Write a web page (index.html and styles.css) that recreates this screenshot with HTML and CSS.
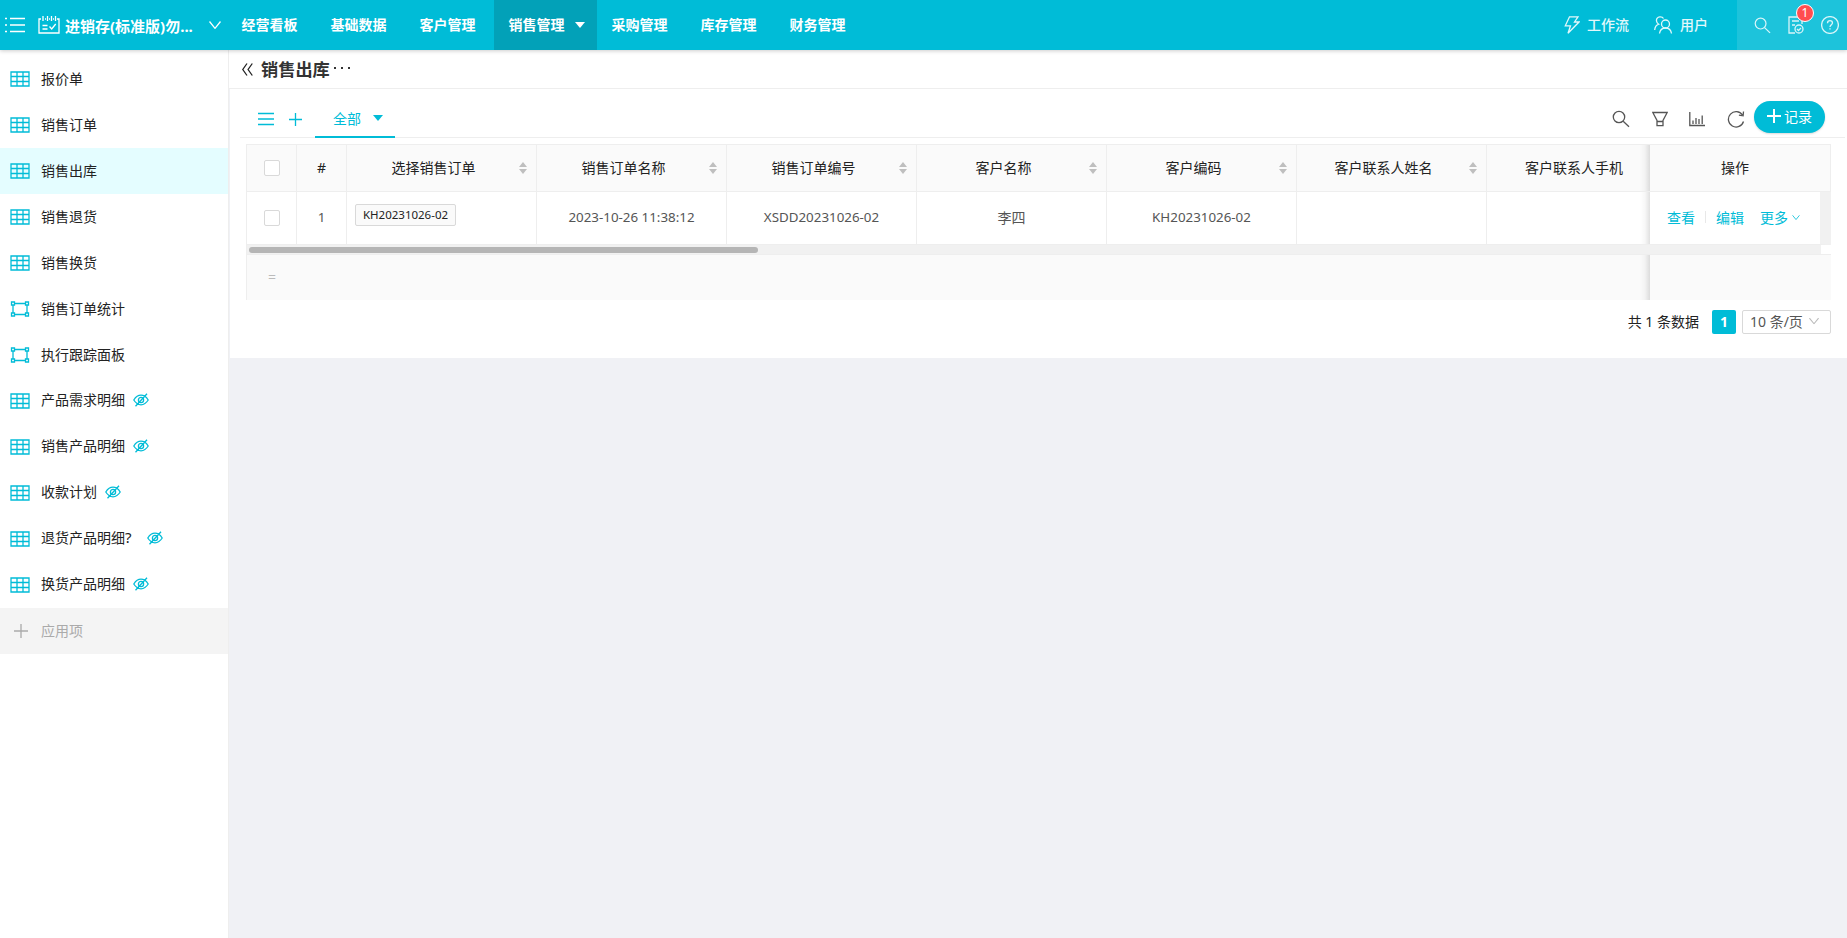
FILE: index.html
```html
<!DOCTYPE html>
<html lang="zh-CN">
<head>
  <meta charset="UTF-8">
  <meta name="viewport" content="width=device-width, initial-scale=1.0">
  <title>销售出库</title>
  <link rel="stylesheet" href="styles.css">
</head>
<body>

  <!-- Shared icons -->
  <svg class="sprite" width="0" height="0">
    <symbol id="i-table" viewBox="0 0 20 16">
      <path d="M1 1h18v14H1zM1 5.5h18M1 10.5h18M7 1v14M13 1v14"/>
    </symbol>
    <symbol id="i-board" viewBox="0 0 20 16">
      <path d="M4.5 2.5h11M4.5 13.5h11M3 4.500v7M17 4.500v7M1.500 1h3v3h-3zM15.500 1h3v3h-3zM1.500 12h3v3h-3zM15.500 12h3v3h-3z"/>
    </symbol>
    <symbol id="i-hidden" viewBox="0 0 16 14">
      <path d="M.8 7C3 3.500 5.500 2.200 8 2.200s5 1.300 7.200 4.800C13 10.500 10.500 11.800 8 11.800S3 10.500.8 7zM14 .8L2.500 13.300"/>
      <circle cx="8" cy="7" r="2.600"/>
    </symbol>
    <symbol id="i-search" viewBox="0 0 18 18">
      <circle cx="7" cy="7" r="5.700"/><path d="M11.200 11.200L17 16.800"/>
    </symbol>
    <symbol id="i-down" viewBox="0 0 12 8">
      <path d="M.5.500L6 7.300 11.500.5"/>
    </symbol>
    <symbol id="i-sort" viewBox="0 0 8 12">
      <path d="M4 0l4 5H0zM4 12l4-5H0z"/>
    </symbol>
  </svg>

  <header class="topbar">
    <svg class="icon menu-icon" width="20" height="16" viewBox="0 0 20 16"><path d="M0 1.500h2M5 1.500h15M0 8h2M5 8h15M0 14.500h2M5 14.500h15"/></svg>
    <svg class="icon app-icon" width="22" height="18" viewBox="0 0 22 18"><path d="M3 3H1v14h20V3h-2M7 3h1M12 3h-1M15 3h1M5 0v5M9.500 0v5M13.500 0v5M17.500 0v5M4.500 9.500h5M4.500 13h5M11.500 10.500l2.200 2.500 4-5"/></svg>
    <span class="app-name">进销存(标准版)勿...</span>
    <svg class="icon app-arrow" width="12" height="8"><use href="#i-down"/></svg>
    <nav class="nav">
      <a>经营看板</a>
      <a>基础数据</a>
      <a>客户管理</a>
      <a class="active">销售管理<i class="caret"></i></a>
      <a>采购管理</a>
      <a>库存管理</a>
      <a>财务管理</a>
    </nav>
    <div class="top-links">
      <svg class="icon" width="16" height="18" viewBox="0 0 16 18"><path d="M5.500.8h8.500L10.500 6H15L4 17.200 6.500 9.800H1.300z"/></svg>
      <span class="flow">工作流</span>
      <svg class="icon" width="19" height="18" viewBox="0 0 19 18"><circle cx="11.500" cy="8" r="4"/><path d="M5.500 17.500c.5-3.500 3-5.500 6-5.500s5.500 2 6 5.500M9.500 2.500C8.500.8 7 .7 5.800.8 3.500 1.200 2.300 3 2.500 5c.2 1.500 1 2.500 2.200 3.200C2.300 9 1 11 .7 14"/></svg>
      <span>用户</span>
    </div>
    <div class="top-tools">
      <svg class="icon" width="17" height="17"><use href="#i-search"/></svg>
      <span class="todo">
        <svg class="icon" width="16" height="18" viewBox="0 0 16 18"><path d="M14 8V1H1v16h6M4 5h7M4 9h3"/><circle cx="11" cy="13" r="4"/><path d="M9 13l1.500 1.500L13 12"/></svg>
        <b class="badge">1</b>
      </span>
      <svg class="icon" width="18" height="18" viewBox="0 0 18 18"><circle cx="9" cy="9" r="8.400"/><path d="M6.500 7.200C6.500 5.600 7.500 4.700 9 4.700s2.500.9 2.500 2.300C11.500 8.700 9 8.900 9 11M9 12.200v1.300"/></svg>
    </div>
  </header>

  <div class="layout">
    <aside class="sidebar">
      <div class="side-item"><svg class="icon"><use href="#i-table"/></svg>报价单</div>
      <div class="side-item"><svg class="icon"><use href="#i-table"/></svg>销售订单</div>
      <div class="side-item selected"><svg class="icon"><use href="#i-table"/></svg>销售出库</div>
      <div class="side-item"><svg class="icon"><use href="#i-table"/></svg>销售退货</div>
      <div class="side-item"><svg class="icon"><use href="#i-table"/></svg>销售换货</div>
      <div class="side-item"><svg class="icon"><use href="#i-board"/></svg>销售订单统计</div>
      <div class="side-item"><svg class="icon"><use href="#i-board"/></svg>执行跟踪面板</div>
      <div class="side-item off"><svg class="icon"><use href="#i-table"/></svg>产品需求明细<svg class="icon eye"><use href="#i-hidden"/></svg></div>
      <div class="side-item off"><svg class="icon"><use href="#i-table"/></svg>销售产品明细<svg class="icon eye"><use href="#i-hidden"/></svg></div>
      <div class="side-item off"><svg class="icon"><use href="#i-table"/></svg>收款计划<svg class="icon eye"><use href="#i-hidden"/></svg></div>
      <div class="side-item off"><svg class="icon"><use href="#i-table"/></svg>退货产品明细<span class="mark">?</span><svg class="icon eye"><use href="#i-hidden"/></svg></div>
      <div class="side-item off"><svg class="icon"><use href="#i-table"/></svg>换货产品明细<svg class="icon eye"><use href="#i-hidden"/></svg></div>
      <div class="side-item add"><svg class="icon" viewBox="0 0 20 16"><path d="M11 1v14M4 8h14"/></svg>应用项</div>
    </aside>

    <main class="main">
      <div class="page-title">
        <svg class="icon" width="11" height="13" viewBox="0 0 11 13"><path d="M5 .5L.8 6.500 5 12.500M10.300.5L6.100 6.500l4.200 6"/></svg>
        <h1>销售出库</h1>
        <span class="dots"><i></i><i></i><i></i></span>
      </div>

      <div class="panel">
        <div class="toolbar">
          <svg class="icon list" width="16" height="14" viewBox="0 0 16 14"><path d="M0 1.500h16M0 7h16M0 12.500h16"/></svg>
          <svg class="icon plus" width="13" height="14" viewBox="0 0 13 14"><path d="M6.500 1v13M0 7.500h13"/></svg>
          <div class="tab">全部<i class="caret"></i></div>
          <div class="actions">
            <svg class="icon" width="18" height="18"><use href="#i-search"/></svg>
            <svg class="icon" width="16" height="16" viewBox="0 0 16 16"><path d="M.8 1.500h14.400L11 9.500v5.200H5V9.500zM5 10.500h6"/></svg>
            <svg class="icon" width="16" height="16" viewBox="0 0 16 16"><path d="M.8 1v13.500H16M4 9.500V13M7 7v6M10 8v5M13.200 4.500V13"/></svg>
            <svg class="icon" width="18" height="18" viewBox="0 0 18 18"><path d="M15.500 5A7.700 7.700 0 1 0 16.500 11.500M16.500 1.500l-.4 4.300-4.200-.6"/></svg>
            <button class="add-btn"><svg class="icon" width="14" height="14" viewBox="0 0 14 14"><path d="M7 0v14M0 7h14"/></svg>记录</button>
          </div>
        </div>

        <div class="table">
          <div class="row head">
            <div class="cell"><i class="check"></i></div>
            <div class="cell">#</div>
            <div class="cell sortable">选择销售订单<svg class="sort"><use href="#i-sort"/></svg></div>
            <div class="cell sortable">销售订单名称<svg class="sort"><use href="#i-sort"/></svg></div>
            <div class="cell sortable">销售订单编号<svg class="sort"><use href="#i-sort"/></svg></div>
            <div class="cell sortable">客户名称<svg class="sort"><use href="#i-sort"/></svg></div>
            <div class="cell sortable">客户编码<svg class="sort"><use href="#i-sort"/></svg></div>
            <div class="cell sortable">客户联系人姓名<svg class="sort"><use href="#i-sort"/></svg></div>
            <div class="cell last">客户联系人手机</div>
            <div class="cell fixed">操作</div>
          </div>
          <div class="row body">
            <div class="cell"><i class="check"></i></div>
            <div class="cell">1</div>
            <div class="cell tag-cell"><span class="tag">KH20231026-02</span></div>
            <div class="cell">2023-10-26 11:38:12</div>
            <div class="cell">XSDD20231026-02</div>
            <div class="cell cn">李四</div>
            <div class="cell">KH20231026-02</div>
            <div class="cell"></div>
            <div class="cell last"></div>
            <div class="cell fixed ops">
              <a>查看</a><i class="sep"></i><a>编辑</a><a class="more">更多<svg class="icon" width="8" height="5"><use href="#i-down"/></svg></a>
            </div>
          </div>
          <div class="scroll"><div class="thumb"></div></div>
          <div class="row summary">
            <div class="cell">=</div>
            <div class="cell rest"></div>
            <div class="cell fixed"></div>
          </div>
        </div>

        <div class="pager">
          <span class="count">共 1 条数据</span>
          <b class="page">1</b>
          <div class="size">10 条/页<svg class="icon" width="10" height="8" viewBox="0 0 12 8"><use href="#i-down"/></svg></div>
        </div>
      </div>
    </main>
  </div>

</body>
</html>
```
FILE: styles.css
```css
* {
  box-sizing: border-box;
}

body {
  margin: 0;
  height: 938px;
  overflow: hidden;
  background: #f0f1f5;
  color: #222;
  font-family: "Noto Sans", "Noto Sans CJK SC", sans-serif;
  font-size: 14px;
}

.sprite {
  position: absolute;
}

.icon {
  flex: none;
  fill: none;
  stroke: currentColor;
  stroke-width: 1.3;
}

.caret {
  border: 5px solid transparent;
  border-top: 6px solid currentColor;
  border-bottom: 0;
}

/* top bar */
.topbar {
  position: relative;
  display: flex;
  align-items: center;
  height: 50px;
  background: #00bcd7;
  color: #fff;
  box-shadow: 0 1px 4px rgba(0, 0, 0, 0.2);
  z-index: 1;
}

.menu-icon {
  margin-left: 5px;
}

.app-icon {
  margin-left: 13px;
}

.app-name {
  width: 144px;
  margin-left: 5px;
  font-size: 15px;
  font-weight: bold;
  white-space: nowrap;
}

.nav {
  display: flex;
  height: 50px;
  margin-left: 6px;
  font-weight: bold;
}

.nav a {
  display: flex;
  align-items: center;
  padding: 0 15px 2px 14.5px;
  margin-right: 3.5px;
}

.nav .active {
  background: #02a1b8;
  padding-right: 12.5px;
  margin-right: 0;
}

.nav .caret {
  margin: 2px 0 0 10px;
}

.top-links {
  display: flex;
  align-items: center;
  margin-left: auto;
  margin-right: 29px;
  color: #e2f8fb;
  font-weight: 500;
}

.top-links span {
  margin-left: 7px;
  padding-bottom: 2px;
}

.top-links .flow {
  margin-left: 7px;
  margin-right: 25px;
}

.top-tools {
  display: flex;
  align-items: center;
  justify-content: space-between;
  width: 110px;
  height: 50px;
  padding: 0 8px 0 17px;
  background: #1dc3db;
  color: #d8f5f9;
}

.todo {
  position: relative;
  height: 18px;
}

.badge {
  position: absolute;
  left: 8px;
  top: -12px;
  width: 18px;
  height: 18px;
  border: 1px solid #fff;
  border-radius: 50%;
  background: #ff4d4f;
  color: #fff;
  font-size: 12px;
  font-weight: normal;
  line-height: 16px;
  text-align: center;
}

.layout {
  display: flex;
  height: 888px;
}

/* sidebar */
.sidebar {
  width: 229px;
  padding-top: 6px;
  background: #fff;
  border-right: 1px solid #eee;
}

.side-item {
  display: flex;
  align-items: center;
  height: 46px;
  padding-left: 10px;
  padding-bottom: 2px;
}

.side-item .icon {
  width: 20px;
  height: 16px;
  margin-top: 2px;
  margin-right: 11px;
  color: #00bcd7;
}

.side-item.off {
  padding-bottom: 4px;
}

.side-item.off .icon {
  margin-top: 4px;
}

.side-item .icon.eye {
  width: 16px;
  height: 14px;
  margin-top: 2px;
  margin-left: 8px;
}

.mark {
  width: 14px;
  font-size: 15px;
}

.selected {
  background: #e4fdff;
}

.side-item.add,
.side-item.add .icon {
  color: #aaa;
}

.side-item.add {
  background: #f4f4f4;
}

/* main area */
.main {
  flex: 1;
  min-width: 0;
}

.page-title {
  display: flex;
  align-items: center;
  height: 39px;
  padding-left: 13px;
  background: #fff;
  border-bottom: 1px solid #eee;
}

.page-title h1 {
  margin: 0 4px 2px 8px;
  font-size: 17.2px;
  color: #333;
}

.dots {
  display: flex;
  gap: 5px;
  padding-bottom: 2px;
}

.dots i {
  width: 2px;
  height: 2px;
  background: #333;
}

.panel {
  height: 269px;
  margin-left: 1px;
  padding: 0 2px 0 10px;
  background: #fff;
}

.toolbar {
  display: flex;
  align-items: center;
  height: 49px;
  padding-left: 18px;
  padding-top: 12px;
  border-bottom: 1px solid #eee;
  color: #00bcd7;
}

.plus {
  margin-left: 15px;
}

.tab {
  display: flex;
  align-items: center;
  width: 80px;
  height: 38px;
  margin-left: 13px;
  padding-left: 18px;
  border-bottom: 2px solid #00bcd7;
}

.tab .caret {
  margin-left: 12px;
}

.actions {
  display: flex;
  align-items: center;
  margin-left: auto;
  margin-right: 20px;
  gap: 21.5px;
  color: #555;
}

.actions > .icon {
  margin-top: -1px;
}

.add-btn {
  display: flex;
  align-items: center;
  justify-content: center;
  gap: 3px;
  width: 71px;
  height: 32px;
  margin: -4px 0 0 -12px;
  padding: 0 0 3px;
  border: 0;
  border-radius: 16px;
  background: #00bcd7;
  box-shadow: 0 1px 2px rgba(0, 0, 0, 0.15);
  color: #fff;
  font-family: inherit;
  font-size: 14px;
}

.add-btn .icon {
  margin-top: 1px;
  stroke-width: 2;
}

/* table */
.table {
  width: 1585px;
  margin: 6px 0 0 6px;
  border-left: 1px solid #eee;
}

.row {
  display: grid;
  grid-template-columns: 50px 50px repeat(6, 190px) 163px 181px;
}

.cell {
  position: relative;
  display: flex;
  align-items: center;
  justify-content: center;
  padding-bottom: 2px;
  border-right: 1px solid #eee;
  border-bottom: 1px solid #eee;
}

.head {
  height: 48px;
  background: #fafafa;
  border-top: 1px solid #eee;
}

.head .sortable {
  padding-right: 16px;
}

.head .last {
  padding-left: 11px;
}

.head .fixed {
  padding-right: 10px;
}

.sort {
  position: absolute;
  right: 9px;
  top: 17px;
  width: 8px;
  height: 12px;
  fill: #bfbfbf;
}

.body {
  height: 53px;
  color: #555;
  font-size: 13.35px;
}

.body .cn {
  font-size: 14px;
}

.check {
  width: 16px;
  height: 16px;
  margin-top: 2px;
  border: 1px solid #d9d9d9;
  border-radius: 2px;
  background: #fff;
}

.tag-cell {
  align-items: flex-start;
  justify-content: flex-start;
  padding: 12px 0 0 8px;
}

.tag {
  width: 101px;
  height: 22px;
  border: 1px solid #d9d9d9;
  border-radius: 2px;
  background: #fafafa;
  color: #222;
  font-size: 11.5px;
  line-height: 20px;
  text-align: center;
}

.row .last {
  border-right: 0;
}

.fixed::before {
  content: "";
  position: absolute;
  left: -10px;
  top: 0;
  bottom: 0;
  width: 10px;
  background: linear-gradient(to right, rgba(0, 0, 0, 0), rgba(0, 0, 0, 0.03) 50%, rgba(0, 0, 0, 0.12));
}

.row .ops {
  justify-content: flex-start;
  padding-left: 17px;
  border-right: 11px solid #f1f1f1;
  color: #00bcd7;
  font-size: 14px;
}

.sep {
  width: 1px;
  height: 12px;
  margin: 0 10px;
  background: #e8e8e8;
}

.more {
  display: flex;
  align-items: center;
  gap: 4px;
  margin-left: 16px;
}

.scroll {
  width: 1574px;
  height: 9px;
  padding: 2px 0 0 2px;
  background: #f1f1f1;
}

.thumb {
  width: 509px;
  height: 6px;
  border-radius: 3px;
  background: #b5b5b5;
}

.summary {
  grid-template-columns: 50px 1353px 181px;
  height: 46px;
  border-top: 1px solid #eee;
  background: #fafafa;
  color: #bbb;
}

.summary .cell {
  border: 0;
}

/* pagination */
.pager {
  display: flex;
  align-items: center;
  justify-content: flex-end;
  height: 24px;
  margin: 10px 14px 0 0;
}

.count {
  padding-bottom: 2px;
}

.page {
  width: 24px;
  height: 24px;
  margin: 0 6px 0 13px;
  border-radius: 2px;
  background: #00bcd7;
  color: #fff;
  line-height: 23px;
  text-align: center;
}

.size {
  display: flex;
  align-items: center;
  justify-content: space-between;
  width: 89px;
  height: 24px;
  padding: 0 11px 2px 7px;
  border: 1px solid #d9d9d9;
  border-radius: 2px;
  color: #555;
}

.size .icon {
  color: #bbb;
}
```
